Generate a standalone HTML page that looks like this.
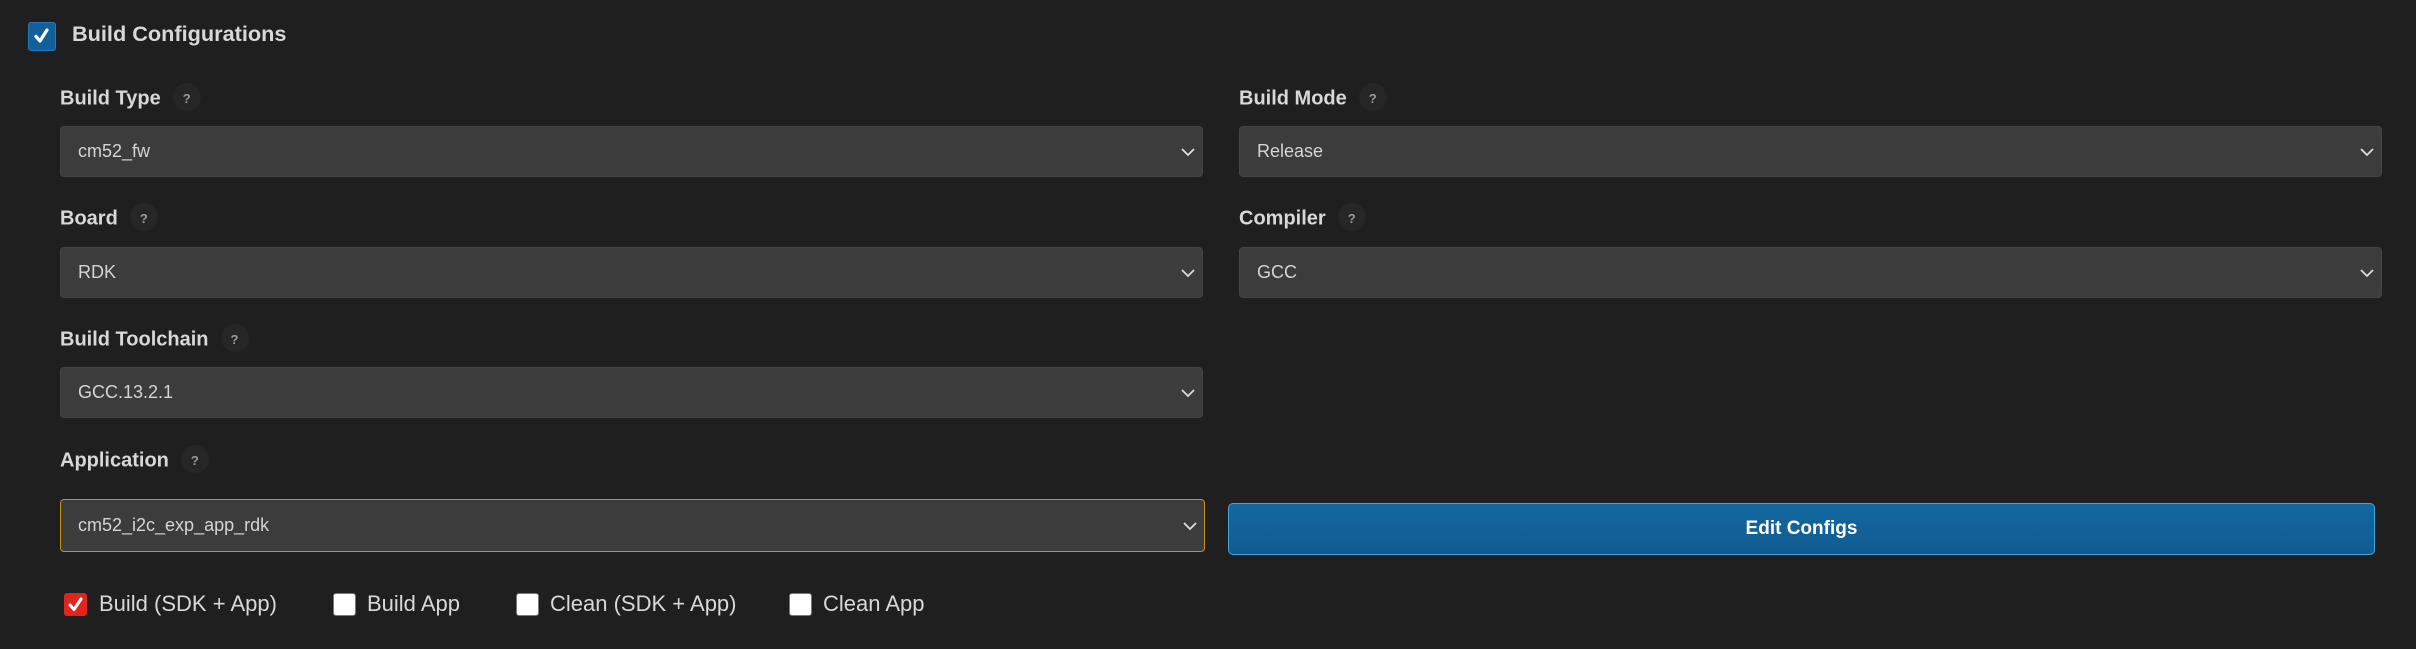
<!DOCTYPE html>
<html><head><style>
*{margin:0;padding:0;box-sizing:border-box}
body{width:2416px;height:649px;background:#1f1f1f;font-family:"Liberation Sans",Arial,sans-serif;position:relative;overflow:hidden;color:#dcdcdc}
.a{position:absolute}
.lbl{position:absolute;font-weight:bold;font-size:20px;color:#d8d8d8;line-height:24px}
.q{display:inline-block;width:28px;height:28px;border-radius:50%;background:#262626;color:#9a9a9a;font-size:13px;font-weight:bold;text-align:center;line-height:32px;vertical-align:middle;margin-left:12px;position:relative;top:-2px}
.sel{position:absolute;background:#3c3c3c;border:1px solid #444;border-radius:4px;font-size:18px;color:#d4d4d4;padding-left:17px;display:flex;align-items:center}
.sel svg{position:absolute;right:6px;top:50%;margin-top:-5px}
.cb{position:absolute;width:23px;height:23px;border-radius:3px;background:#fff;border:1px solid #777}
.cl{position:absolute;font-size:22px;color:#d8d8d8;line-height:24px}
</style></head><body>
<div class="a" style="left:28px;top:22px;width:28px;height:29px;background:#11609a;border-radius:3px;border:1px solid #2a78b8"><svg width="26" height="26" viewBox="0 0 26 26"><path d="M7 13.5 L11 18 L18 7" stroke="#fff" stroke-width="3.2" fill="none" stroke-linecap="round" stroke-linejoin="round"/></svg></div>
<div class="lbl" style="left:72px;top:22px;font-size:21.7px">Build Configurations</div>

<div class="lbl" style="left:60px;top:85px">Build Type<span class="q">?</span></div>
<div class="sel" style="left:60px;top:126px;width:1143px;height:51px">cm52_fw<svg width="16" height="10"><path d="M2 2 L8 8 L14 2" stroke="#ddd" stroke-width="1.8" fill="none"/></svg></div>
<div class="lbl" style="left:1239px;top:85px">Build Mode<span class="q">?</span></div>
<div class="sel" style="left:1239px;top:126px;width:1143px;height:51px">Release<svg width="16" height="10"><path d="M2 2 L8 8 L14 2" stroke="#ddd" stroke-width="1.8" fill="none"/></svg></div>

<div class="lbl" style="left:60px;top:205px">Board<span class="q">?</span></div>
<div class="sel" style="left:60px;top:247px;width:1143px;height:51px">RDK<svg width="16" height="10"><path d="M2 2 L8 8 L14 2" stroke="#ddd" stroke-width="1.8" fill="none"/></svg></div>
<div class="lbl" style="left:1239px;top:205px">Compiler<span class="q">?</span></div>
<div class="sel" style="left:1239px;top:247px;width:1143px;height:51px">GCC<svg width="16" height="10"><path d="M2 2 L8 8 L14 2" stroke="#ddd" stroke-width="1.8" fill="none"/></svg></div>

<div class="lbl" style="left:60px;top:326px">Build Toolchain<span class="q">?</span></div>
<div class="sel" style="left:60px;top:367px;width:1143px;height:51px">GCC.13.2.1<svg width="16" height="10"><path d="M2 2 L8 8 L14 2" stroke="#ddd" stroke-width="1.8" fill="none"/></svg></div>

<div class="lbl" style="left:60px;top:447px">Application<span class="q">?</span></div>
<div class="sel" style="left:60px;top:499px;width:1145px;height:53px;border-color:#c8901a">cm52_i2c_exp_app_rdk<svg width="16" height="10"><path d="M2 2 L8 8 L14 2" stroke="#ddd" stroke-width="1.8" fill="none"/></svg></div>
<div class="a" style="left:1228px;top:503px;width:1147px;height:52px;background:linear-gradient(#13679f,#105c92);border:1px solid #4aa3d8;border-radius:5px;color:#fff;font-weight:bold;font-size:19px;display:flex;align-items:center;justify-content:center">Edit Configs</div>

<div class="cb" style="left:64px;top:593px;background:#e0251f;border-color:#e0251f"><svg width="21" height="21" viewBox="0 0 21 21"><path d="M5 11 L9 15.5 L16 5" stroke="#fff" stroke-width="3" fill="none" stroke-linecap="round" stroke-linejoin="round"/></svg></div>
<div class="cl" style="left:99px;top:592px">Build (SDK + App)</div>
<div class="cb" style="left:333px;top:593px"></div>
<div class="cl" style="left:367px;top:592px">Build App</div>
<div class="cb" style="left:516px;top:593px"></div>
<div class="cl" style="left:550px;top:592px">Clean (SDK + App)</div>
<div class="cb" style="left:789px;top:593px"></div>
<div class="cl" style="left:823px;top:592px">Clean App</div>
</body></html>
